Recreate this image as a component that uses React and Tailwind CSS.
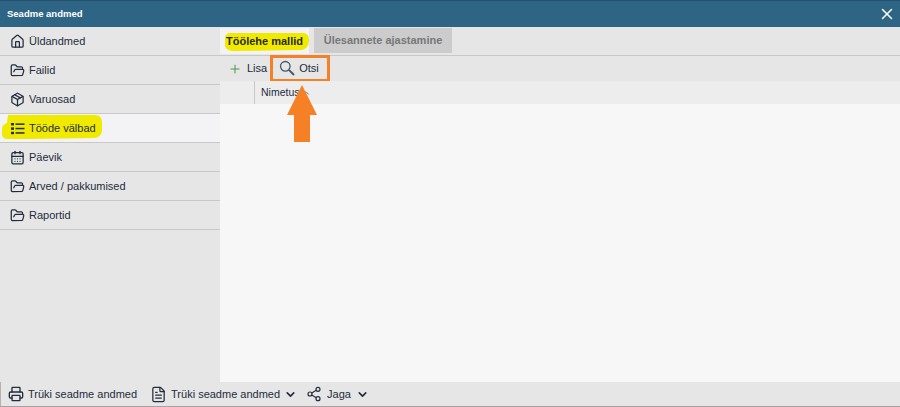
import { X, House, FolderOpen, Package, CalendarDays, Plus, Printer, FileText, ChevronDown, ChevronUp, Share2 } from 'lucide-react'

const ListIcon = ({ className }) => (
	<svg className={className} width="15" height="15" viewBox="0 0 15 15" fill="currentColor">
		<rect x="1" y="2" width="3" height="2.4" />
		<rect x="1" y="6.4" width="3" height="2.4" />
		<rect x="1" y="10.8" width="3" height="2.4" />
		<rect x="5.5" y="2.4" width="9" height="1.5" />
		<rect x="5.5" y="6.8" width="9" height="1.5" />
		<rect x="5.5" y="11.2" width="9" height="1.5" />
	</svg>
)

const SearchIcon = ({ className }) => (
	<svg className={className} width="16" height="16" viewBox="0 0 16 16" fill="none" stroke="currentColor">
		<circle cx="6.3" cy="6.3" r="4.8" strokeWidth="1.3" />
		<path d="M9.9 9.9 L15 15" strokeWidth="2" />
	</svg>
)

const menu = [
	{ label: 'Üldandmed', icon: House },
	{ label: 'Failid', icon: FolderOpen },
	{ label: 'Varuosad', icon: Package },
	{ label: 'Tööde välbad', icon: ListIcon, active: true },
	{ label: 'Päevik', icon: CalendarDays },
	{ label: 'Arved / pakkumised', icon: FolderOpen },
	{ label: 'Raportid', icon: FolderOpen },
]

function App() {
	return (
		<div className="flex flex-col h-[407px] w-[900px] overflow-hidden bg-[#e6e6e6] text-[#232c3d] border-b border-[#a8a0a0] font-['Liberation_Sans',sans-serif] text-[11px]">
			{/* Header */}
			<header className="h-[27px] shrink-0 flex items-center justify-between bg-[#2e6585] border-t border-[#24506b] text-white">
				<span className="pl-[7px] text-[9.5px] font-bold">Seadme andmed</span>
				<X size={18} strokeWidth={2} className="mr-[4px]" />
			</header>

			<div className="flex flex-1 min-h-0">
				{/* Sidebar */}
				<nav className="w-[220px] shrink-0 flex flex-col">
					{menu.map((item) => (
						<div
							key={item.label}
							className={`relative h-[29px] flex items-center gap-[4px] pl-[10px] border-b border-[#c8c8c8] ${item.active ? 'bg-[#f3f3f5]' : ''}`}
						>
							{item.active && (
								<svg className="absolute left-0 top-0" width="104" height="29" viewBox="0 0 104 29">
									<path d="M8 1 L96 1 Q102 2 102 8 L102 17 Q101 23 95 24 L30 25 L8 25 Q2 25 2 20 L2 14 Q3 10 7 9 Z" fill="#f0ea00" />
								</svg>
							)}
							<item.icon size={15} strokeWidth={2} className="relative" />
							<span className="relative">{item.label}</span>
						</div>
					))}
				</nav>

				{/* Main */}
				<main className="relative flex-1 flex flex-col bg-[#f7f7f7]">
					<div className="h-[29px] shrink-0 flex bg-[#e6e6e6] border-b border-[#c8c8c8] pt-[1px]">
						<div className="relative w-[89px] mb-[1px] flex items-center justify-center bg-[#f3f3f5] font-bold">
							<svg className="absolute left-0 top-0" width="92" height="26" viewBox="0 0 92 26">
								<path d="M9 5 L84 5 Q89 6 89 12 Q89 20 82 22 L14 23 Q6 23 5 18 L5 11 Q5 6 9 5 Z" fill="#f0ea00" />
							</svg>
							<span className="relative text-[#2a2a1a]">Töölehe mallid</span>
						</div>
						<div className="ml-[5px] mb-[2px] w-[138px] flex items-center justify-center bg-[#cccccc] font-bold text-[#777777]">
							Ülesannete ajastamine
						</div>
					</div>
					<div className="h-[25px] shrink-0 flex items-center bg-[#e6e6e6]">
						<Plus size={14} strokeWidth={1.75} className="ml-[8px] text-[#4b9a4b]" />
						<span className="ml-[5px]">Lisa</span>
						<div className="ml-[3px] w-[60px] h-[27px] -mt-[1px] flex items-center border-[3px] border-[#f58025]">
							<SearchIcon className="ml-[6px] text-[#44596a]" />
							<span className="ml-[4px]">Otsi</span>
						</div>
					</div>
					<div className="h-[23px] shrink-0 flex items-center bg-[#ededed]">
						<div className="w-[35px] h-full border-r border-[#c8c8c8]" />
						<span className="ml-[6px] text-[10.5px]">Nimetus</span>
						<ChevronUp size={10} strokeWidth={2} className="ml-[1px] text-[#666666]" />
					</div>
					{/* Arrow annotation */}
					<svg className="absolute left-[67px] top-[58px]" width="31" height="58" viewBox="0 0 31 58">
						<path d="M15 0 L30 30 L23 30 L23 57 L7 57 L7 30 L0 30 Z" fill="#f58025" />
					</svg>
				</main>
			</div>

			{/* Footer */}
			<footer className="h-[24px] shrink-0 flex items-center bg-[#e6e6e6] border-l border-[#b8b0b0]">
				<Printer size={16} strokeWidth={2} className="ml-[7px]" />
				<span className="ml-[4px]">Trüki seadme andmed</span>
				<FileText size={17} strokeWidth={1.75} className="ml-[13px]" />
				<span className="ml-[4px]">Trüki seadme andmed</span>
				<ChevronDown size={13} strokeWidth={3} className="ml-[4px]" />
				<Share2 size={16} strokeWidth={1.75} className="ml-[9px]" />
				<span className="ml-[5px]">Jaga</span>
				<ChevronDown size={13} strokeWidth={3} className="ml-[5px]" />
			</footer>
		</div>
	)
}

export default App
